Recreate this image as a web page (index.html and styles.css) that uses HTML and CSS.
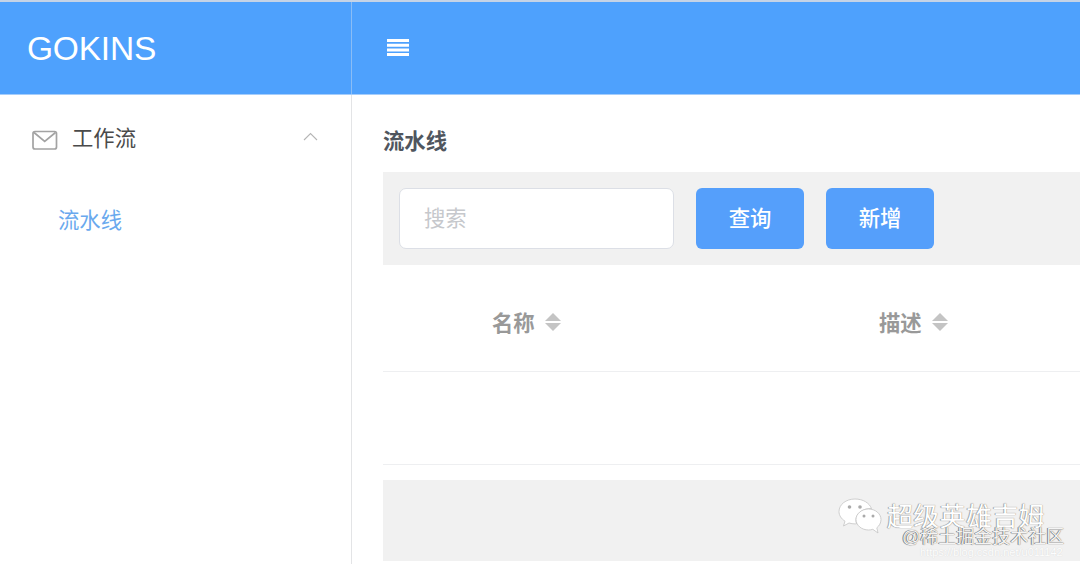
FILE: index.html
```html
<!DOCTYPE html>
<html lang="zh-CN">
<head>
<meta charset="utf-8">
<title>GOKINS</title>
<link rel="stylesheet" href="styles.css">
</head>
<body>
<div class="app">
  <header class="topbar">
    <div class="brand">GOKINS</div>
    <div class="topbar-main">
      <svg class="menu-icon" width="22" height="17" viewBox="0 0 22 17"><path d="M0 0h22v3H0zM0 4.700h22v3H0zM0 9.400h22v3H0zM0 14h22v3H0z" fill="#fff"/></svg>
    </div>
  </header>
  <div class="body">
    <aside class="sidebar">
      <div class="nav-group">
        <svg class="mail-icon" width="26" height="21" viewBox="0 0 26 21" fill="none" stroke="#a3a3a3" stroke-width="1.700"><rect x="1" y="1.500" width="23.500" height="17.500" rx="2"/><path d="M2 2.500l10.700 9 10.800-9"/></svg>
        <span class="nav-label">工作流</span>
        <svg class="chevron" width="15" height="9" viewBox="0 0 15 9" fill="none" stroke="#b5b5b5" stroke-width="1.100"><path d="M1 8l6.500-6.500L14 8"/></svg>
      </div>
      <div class="nav-item">流水线</div>
    </aside>
    <main class="content">
      <h1 class="page-title">流水线</h1>
      <div class="toolbar">
        <div class="search"><span class="placeholder">搜索</span></div>
        <button class="btn btn-query">查询</button>
        <button class="btn btn-add">新增</button>
      </div>
      <div class="table-head">
        <div class="col col-name">名称<span class="sort"><i class="up"></i><i class="down"></i></span></div>
        <div class="col col-desc">描述<span class="sort"><i class="up"></i><i class="down"></i></span></div>
      </div>
      <div class="table-empty"></div>
      <div class="footer-band"></div>
    </main>
  </div>
  <div class="watermark">
    <svg class="wechat" width="44" height="36" viewBox="0 0 44 36"><path d="M17 1C8 1 1 6.500 1 13.500c0 4 2.300 7.300 6 9.700L5.500 28l5.500-3c2 .6 4 .9 6 .9 .8 0 1 0 1.500-.1-.4-1.200-.6-2.300-.6-3.500 0-6.500 6.300-11.700 14.100-11.700h1.500C31.500 5 25 1 17 1z" fill="#fff" stroke="#c4c4c4" stroke-width=".8"/><path d="M43 21.500c0-5.800-5.700-10.500-12.500-10.500S18 15.700 18 21.500 23.700 32 30.500 32c1.500 0 3-.2 4.300-.7L40 35l-1.200-5.200C41.400 27.800 43 24.800 43 21.500z" fill="#fff" stroke="#c4c4c4" stroke-width=".8"/><circle cx="11.500" cy="9" r="1.800" fill="#aaa"/><circle cx="22" cy="9" r="1.800" fill="#aaa"/><circle cx="26" cy="18" r="1.500" fill="#aaa"/><circle cx="35" cy="18" r="1.500" fill="#aaa"/></svg>
    <div class="wm-title">超级英雄吉姆</div>
    <div class="wm-sub">@稀土掘金技术社区</div>
    <div class="wm-url">https://blog.csdn.net/u011142</div>
  </div>
</div>
</body>
</html>
```

FILE: styles.css
```css
* { box-sizing: border-box; }
html, body { margin: 0; padding: 0; height: 100%; overflow: hidden; background: #fff; }
body { font-family: "Liberation Sans", "Noto Sans CJK SC", sans-serif; }
.app { position: relative; width: 1080px; height: 564px; overflow: hidden; display: flex; flex-direction: column; }

.topbar { display: flex; height: 95px; flex: none; background: #4ea1fd; border-top: 2px solid #c5d3e6; border-bottom: 1px solid #a5cdfb; }
.brand { width: 352px; flex: none; padding-left: 27px; border-right: 1px solid #8abdf6; color: #fff; font-size: 33.500px; line-height: 94px; height: 92px; letter-spacing: -.2px; }
.topbar-main { flex: 1; display: flex; align-items: center; padding-left: 35px; padding-bottom: 1px; }

.body { flex: 1; display: flex; min-height: 0; }
.sidebar { width: 352px; flex: none; border-right: 1.5px solid #e3e4e6; }
.nav-group { display: flex; align-items: center; height: 87px; padding: 0 33px 0 32px; color: #4a4a4a; font-size: 21.330px; }
.mail-icon { flex: none; margin-top: 4px; }
.nav-label { margin-left: 14px; flex: 1; margin-top: -4px; }
.chevron { flex: none; margin-top: -4px; }
.nav-item { padding-left: 58px; height: 76px; line-height: 78px; color: #6aa9ee; font-size: 21.330px; }

.content { width: 728px; flex: none; padding-left: 31px; }
.page-title { margin: 33px 0 0; height: 44px; font-size: 21.330px; line-height: 29px; font-weight: 700; color: #50565e; }
.toolbar { display: flex; align-items: center; height: 93px; background: #f1f1f1; padding: 0 0 0 16px; }
.search { width: 275px; height: 61px; background: #fff; border: 1px solid #dcdfe6; border-radius: 7px; padding: 0 0 4px 24px; display: flex; align-items: center; }
.placeholder { color: #c6c8cc; font-size: 21.330px; }
.btn { height: 61px; width: 108px; border: none; border-radius: 6px; background: #559ffb; color: #fff; font: inherit; font-size: 21.330px; font-weight: 500; padding: 0 0 5px; }
.btn-query { margin-left: 22px; }
.btn-add { margin-left: 22px; }

.table-head { display: flex; height: 107px; border-bottom: 1.5px solid #eeeff1; }
.col { display: flex; align-items: center; color: #999; font-size: 21.330px; font-weight: 700; padding-top: 7px; }
.col-name { width: 496px; padding-left: 109px; }
.col-desc { flex: 1; }
.sort { display: inline-flex; flex-direction: column; gap: 2px; margin-left: 10px; margin-top: 1px; }
.sort i { display: block; width: 0; height: 0; border-left: 8px solid transparent; border-right: 8px solid transparent; }
.sort .up { border-bottom: 8px solid #c4c4c4; }
.sort .down { border-top: 8px solid #c4c4c4; }
.table-empty { height: 93px; border-bottom: 1.5px solid #eeeff1; }
.footer-band { height: 81px; margin-top: 15px; background: #f1f1f1; }

.watermark { position: absolute; left: 838px; top: 496px; width: 242px; height: 68px; }
.wechat { position: absolute; left: 0; top: 2px; }
.wm-title { position: absolute; left: 49px; top: 3px; white-space: nowrap; color: #fff; font-size: 26px; line-height: 36px; letter-spacing: .3px; text-shadow: 0 0 1px #666, -1px 0 0 #bbb; }
.wm-sub { position: absolute; left: 64px; top: 29px; white-space: nowrap; color: #f4f4f4; font-size: 18px; line-height: 24px; text-shadow: 0 0 1px #444, -1px 0 0 #999; }
.wm-url { position: absolute; left: 82px; top: 49px; white-space: nowrap; color: #fff; font-size: 11px; line-height: 15px; opacity: .9; text-shadow: 0 0 1px #ccc; }
```
